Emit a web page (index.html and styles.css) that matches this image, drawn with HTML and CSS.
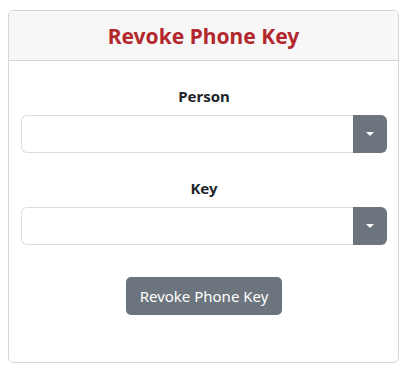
FILE: index.html
```html
<!DOCTYPE html>
<html>
<head>
    <link rel="stylesheet" href="styles.css">
    <title>Revoke Phone Key</title>
</head>
<body>
    <div class="card">
        <div class="card-head">
            <h1 class="title">Revoke Phone Key</h1>
        </div>

        <div class="card-body">
            <div class="field">
                <label class="label">Person</label>
                <div class="pick">
                    <div class="pick-box"></div>
                    <div class="pick-btn"><span class="caret"></span></div>
                </div>
            </div>

            <div class="field">
                <label class="label">Key</label>
                <div class="pick">
                    <div class="pick-box"></div>
                    <div class="pick-btn"><span class="caret"></span></div>
                </div>
            </div>

            <button class="revokeB">Revoke Phone Key</button>
        </div>
    </div>
</body>
</html>
```

FILE: styles.css
```css
body{
    margin: 0;
    padding: 10px 8px;
    background-color: white;
    font-family: "Noto Sans", "Open Sans", Arial, sans-serif;
    color: #212529;
}

.card{
    width: 391px;
    height: 353px;
    box-sizing: border-box;
    border: 1px solid #d6d6d6;
    border-radius: 5px;
    overflow: hidden;
}

.card-head{
    height: 50px;
    box-sizing: border-box;
    background-color: #f7f7f7;
    border-bottom: 1px solid #d6d6d6;
    display: flex;
    justify-content: center;
    align-items: center;
}

.title{
    margin: 0;
    font-size: 21px;
    font-weight: bold;
    color: #b3282d;
}

.card-body{
    padding: 24px 11px 0 12px;
    display: flex;
    flex-direction: column;
    align-items: center;
}

.field{
    width: 100%;
    display: flex;
    flex-direction: column;
    align-items: center;
    margin-bottom: 24px;
}

.label{
    font-size: 15px;
    font-weight: bold;
    line-height: 22px;
    margin-bottom: 8px;
}

.pick{
    width: 100%;
    height: 38px;
    display: flex;
}

.pick-box{
    flex: 1;
    border: 1px solid #dcdde2;
    border-right: none;
    border-radius: 6px 0 0 6px;
}

.pick-btn{
    width: 34px;
    background-color: #6c757d;
    border-radius: 0 6px 6px 0;
    display: flex;
    justify-content: center;
    align-items: center;
}

.caret{
    width: 0;
    height: 0;
    border-left: 4px solid transparent;
    border-right: 4px solid transparent;
    border-top: 4px solid white;
}

.revokeB{
    margin-top: 8px;
    background-color: #6c757d;
    color: white;
    border: none;
    border-radius: 5px;
    font-family: inherit;
    font-size: 15px;
    width: 156px;
    height: 38px;
    padding: 0;
}
```
